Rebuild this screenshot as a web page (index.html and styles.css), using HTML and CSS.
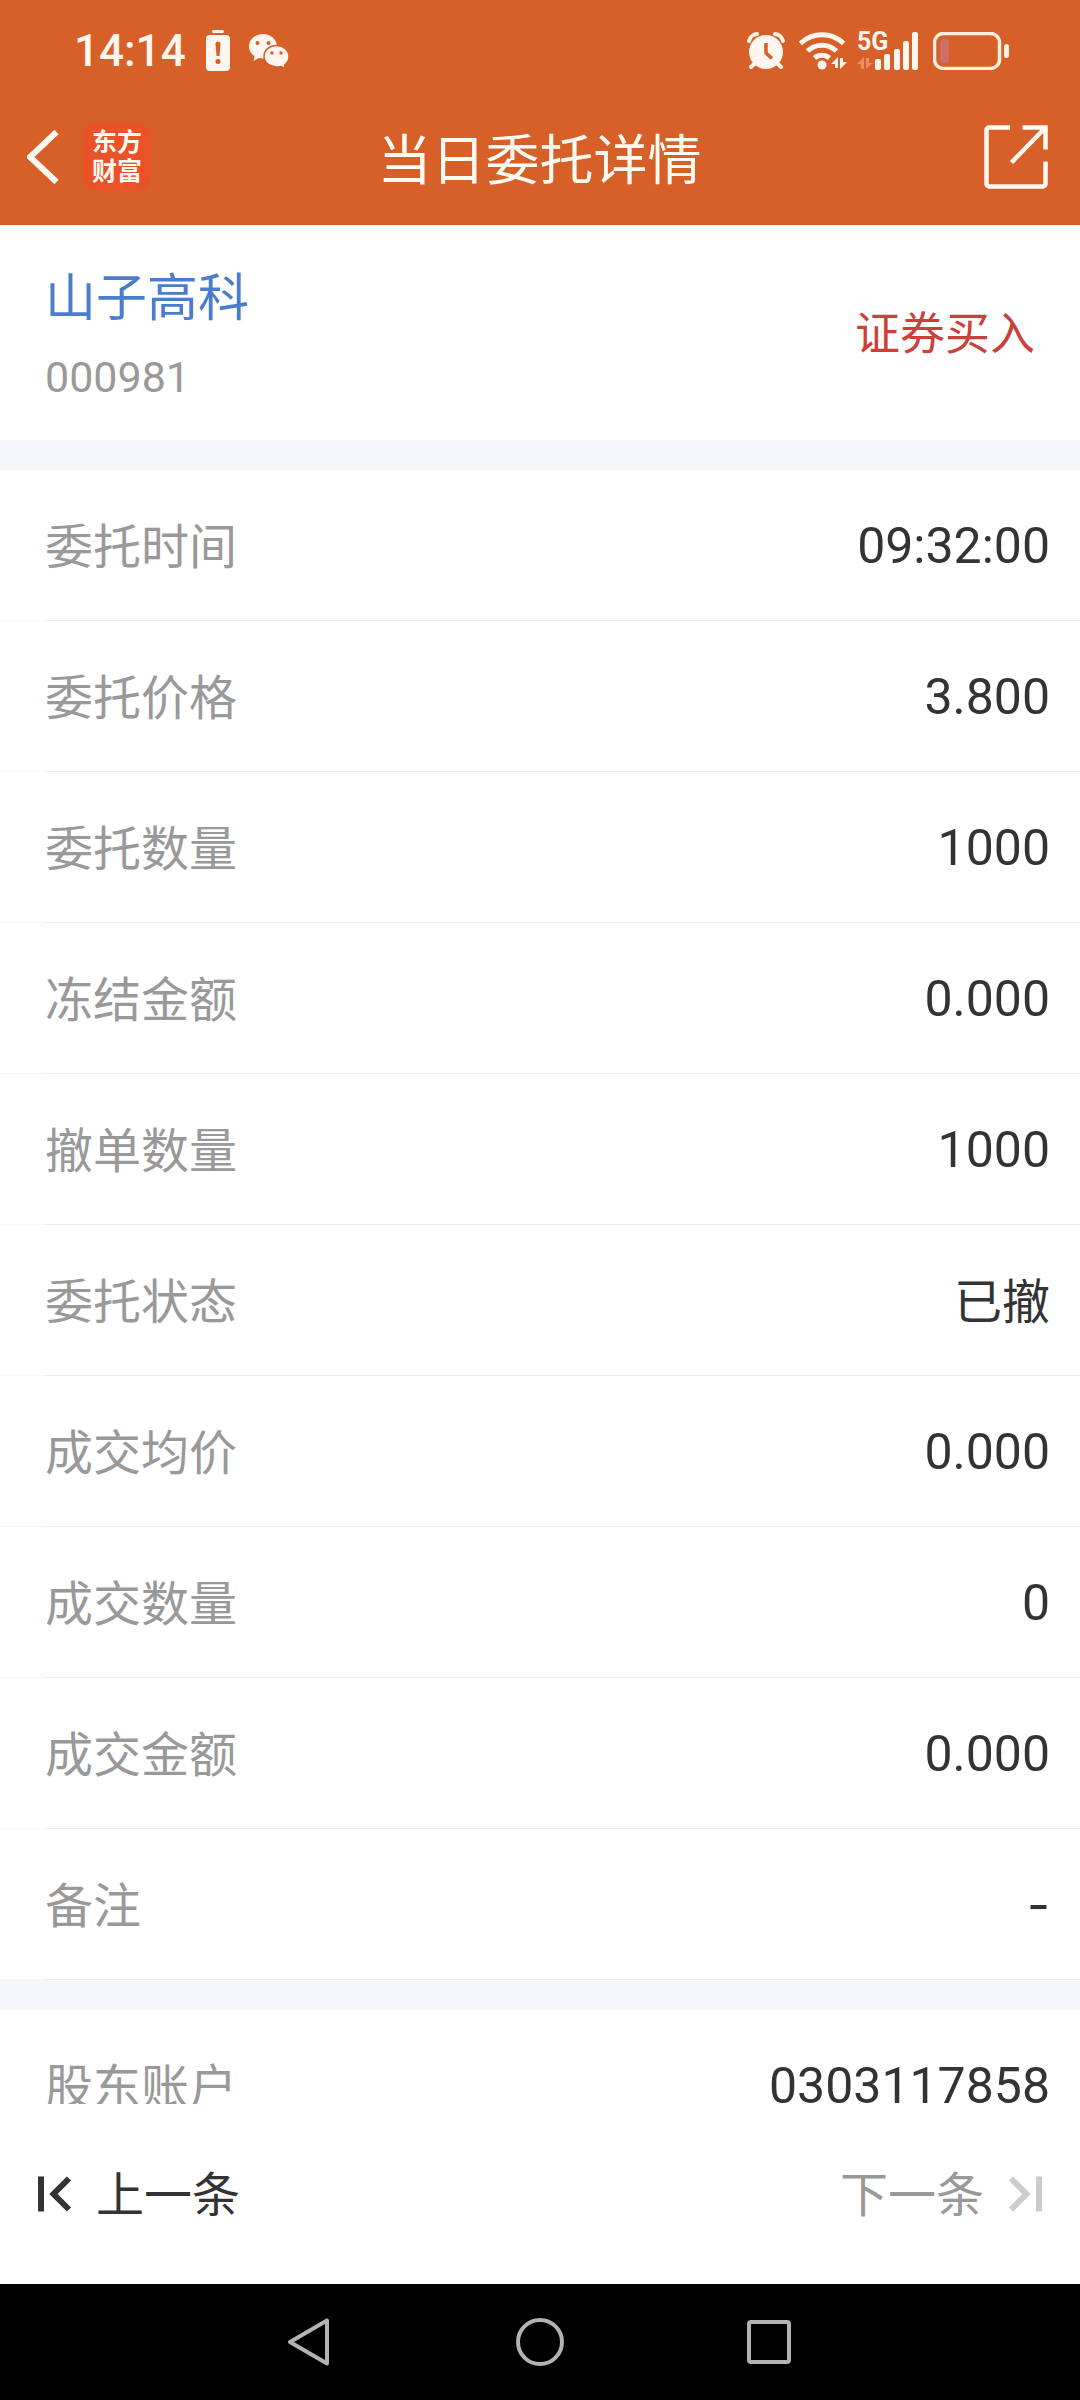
FILE: index.html
```html
<!DOCTYPE html>
<html lang="zh-CN">
<head>
<meta charset="utf-8">
<meta name="viewport" content="width=device-width, initial-scale=1">
<title>当日委托详情</title>
<link rel="stylesheet" href="styles.css">
</head>
<body>
<div class="app">
  <header class="top">
    <div class="status">
      <div class="status-left">
        <span class="clock">14:14</span>
        <svg class="icon-alert" width="24" height="42" viewBox="0 0 24 42" aria-hidden="true">
          <rect x="6" y="0" width="12" height="3" rx="1.5" fill="#fff6ef"/>
          <rect x="0" y="5" width="24" height="36" rx="4" fill="#fff6ef"/>
          <path d="M9.500 14a2.500 2.500 0 0 1 5 0l-1 12h-3z" fill="#d75f28"/>
          <circle cx="12" cy="31.500" r="2.500" fill="#d75f28"/>
        </svg>
        <svg class="icon-chat" width="42" height="36" viewBox="0 0 42 36" aria-hidden="true">
          <path d="M15 1C7 1 1 6.500 1 13.500c0 4 2 7.500 5.500 9.800L5.500 28l5.500-3c1.300.3 2.600.5 4 .5 8 0 14-5.500 14-12S23 1 15 1z" fill="#fff6ef"/>
          <path d="M28.500 12.500c-7 0-12.500 4.700-12.500 10.700s5.500 10.800 12.500 10.800c1.600 0 3-.2 4.400-.6l4.600 2.600-1-4c2.800-2 4.500-5.200 4.500-8.800 0-6-5.500-10.700-12.500-10.700z" fill="#fff6ef" stroke="#d75f28" stroke-width="1.500"/>
          <g fill="#d75f28"><circle cx="9.500" cy="10" r="2"/><circle cx="20.500" cy="10" r="2"/><circle cx="24" cy="20" r="1.700"/><circle cx="33" cy="20" r="1.700"/></g>
        </svg>
      </div>
      <div class="status-right">
        <svg width="38" height="38" viewBox="0 0 38 38" aria-hidden="true">
          <g fill="none" stroke="#fff6ef" stroke-linecap="round">
            <path d="M2 9A9 9 0 0 1 10 2M36 9a9 9 0 0 0-8-7" stroke-width="4"/>
            <path d="M8 31l-4 4M30 31l4 4" stroke-width="4"/>
          </g>
          <circle cx="19" cy="20" r="17" fill="#fff6ef"/>
          <path d="M19 11v10l6 5.500" fill="none" stroke="#d75f28" stroke-width="3.500"/>
        </svg>
        <svg width="48" height="38" viewBox="0 0 48 38" aria-hidden="true">
          <g fill="none" stroke="#fff6ef" stroke-width="5">
            <path d="M1.500 11.500a31 31 0 0 1 43 0"/>
            <path d="M8.500 19a21 21 0 0 1 29 0"/>
            <path d="M15.500 26a12 12 0 0 1 15 0"/>
          </g>
          <circle cx="23" cy="33" r="4.500" fill="#fff6ef"/>
          <path d="M32 32l7-7v11h-3v-4zM48 30l-7 7V26h3v4z" fill="#fff6ef"/>
        </svg>
        <div class="cell">
          <span class="cell-label">5G</span>
          <svg width="62" height="38" viewBox="0 0 62 38" aria-hidden="true">
            <path d="M0 32l7-7v12H4v-5zM16 31l-7 6V26h3v5z" fill="#ea8e66"/>
            <g fill="#fff6ef"><rect x="18" y="27" width="6" height="11" rx="2"/><rect x="27" y="22" width="6" height="16" rx="2"/><rect x="37" y="17" width="6" height="21" rx="2"/><rect x="46" y="9" width="6" height="29" rx="2"/><rect x="55" y="0" width="6" height="38" rx="2"/></g>
          </svg>
        </div>
        <svg width="76" height="38" viewBox="0 0 76 38" aria-hidden="true">
          <rect x="1.500" y="1.500" width="65" height="35" rx="9" fill="none" stroke="#ffeedd" stroke-width="3.500"/>
          <rect x="7" y="7" width="9" height="24" rx="4" fill="#cc6e6a"/>
          <rect x="71" y="12" width="5" height="14" rx="2.500" fill="#ffeedd"/>
        </svg>
      </div>
    </div>
    <div class="titlebar">
      <div class="title-left">
        <button class="icon-button" type="button" aria-label="返回">
          <svg width="32" height="54" viewBox="0 0 32 54"><path d="M29.500 2L3 27l26.500 25" fill="none" stroke="#fffaf2" stroke-width="6"/></svg>
        </button>
        <div class="logo"><span>东方</span><span>财富</span></div>
      </div>
      <h1 class="title">当日委托详情</h1>
      <div class="title-right">
        <button class="icon-button" type="button" aria-label="分享">
          <svg width="64" height="64" viewBox="0 0 64 64"><g fill="none" stroke="#fffaf2" stroke-width="4.500"><path d="M26 2.500H5a2.500 2.500 0 0 0-2.500 2.500v54a2.500 2.500 0 0 0 2.500 2.500h54a2.500 2.500 0 0 0 2.500-2.500V36.500"/><path d="M38.500 2.500h23v22M61 3L27.500 37.500"/></g></svg>
        </button>
      </div>
    </div>
  </header>

  <main class="content">
    <section class="stock">
      <div class="stock-id">
        <a class="stock-name" href="#stock">山子高科</a>
        <span class="stock-code">000981</span>
      </div>
      <span class="side">证券买入</span>
    </section>
    <dl class="rows">
      <div class="row"><dt>委托时间</dt><dd>09:32:00</dd></div>
      <div class="row"><dt>委托价格</dt><dd>3.800</dd></div>
      <div class="row"><dt>委托数量</dt><dd>1000</dd></div>
      <div class="row"><dt>冻结金额</dt><dd>0.000</dd></div>
      <div class="row"><dt>撤单数量</dt><dd>1000</dd></div>
      <div class="row"><dt>委托状态</dt><dd class="word">已撤</dd></div>
      <div class="row"><dt>成交均价</dt><dd>0.000</dd></div>
      <div class="row"><dt>成交数量</dt><dd>0</dd></div>
      <div class="row"><dt>成交金额</dt><dd>0.000</dd></div>
      <div class="row"><dt>备注</dt><dd class="empty">-</dd></div>
    </dl>
    <dl class="rows">
      <div class="row"><dt>股东账户</dt><dd>0303117858</dd></div>
    </dl>
  </main>

  <nav class="pager" aria-label="委托记录">
    <button class="pager-button" type="button">
      <svg width="34" height="36" viewBox="0 0 34 36" aria-hidden="true"><path d="M3 0.500v35M31 2.500L15.500 18 31 33.500" fill="none" stroke="#333" stroke-width="6"/></svg>
      <span>上一条</span>
    </button>
    <button class="pager-button" type="button" disabled>
      <span>下一条</span>
      <svg width="34" height="36" viewBox="0 0 34 36" aria-hidden="true"><path d="M31 0.500v35M3 2.500L18.500 18 3 33.500" fill="none" stroke="#ccc" stroke-width="6"/></svg>
    </button>
  </nav>

  <nav class="system" aria-label="系统导航">
    <button class="icon-button" type="button" aria-label="后退"><svg width="48" height="48" viewBox="0 0 48 48"><path d="M41 2.500v43L4 24z" fill="none" stroke="#b3b3b3" stroke-width="4" stroke-linejoin="round"/></svg></button>
    <button class="icon-button" type="button" aria-label="主屏幕"><svg width="48" height="48" viewBox="0 0 48 48"><circle cx="24" cy="24" r="22" fill="none" stroke="#b3b3b3" stroke-width="4"/></svg></button>
    <button class="icon-button" type="button" aria-label="最近任务"><svg width="48" height="48" viewBox="0 0 48 48"><rect x="3" y="4" width="40" height="40" rx="2" fill="none" stroke="#b3b3b3" stroke-width="4"/></svg></button>
  </nav>
</div>
</body>
</html>
```
FILE: styles.css
```css
* { box-sizing: border-box; }

body {
  margin: 0;
  background: #fff;
  color: #333;
  font-family: Roboto, "Noto Sans CJK SC", sans-serif;
}

button {
  padding: 0;
  border: 0;
  background: none;
  color: inherit;
  font: inherit;
}

svg { display: block; flex: none; }

.app {
  display: flex;
  flex-direction: column;
  height: 100vh;
}

/* Header */
.top { background: #d75f28; color: #fffaf2; }

.status {
  display: flex;
  justify-content: space-between;
  align-items: center;
  height: 102px;
  padding: 0 71px 0 74px;
  color: #fff6ef;
}

.status-left,
.status-right { display: flex; align-items: center; }

.status-right { gap: 14px; }
.clock { font-size: 44px; font-weight: 500; line-height: 54px; }
.icon-alert { margin-left: 20px; }
.icon-chat { margin-left: 18px; }

.cell { position: relative; margin-left: -4px; }

.cell-label {
  position: absolute;
  top: 0;
  left: 0;
  font-size: 25px;
  font-weight: 700;
  line-height: 20px;
}

.titlebar {
  display: grid;
  grid-template-columns: 1fr auto 1fr;
  align-items: center;
  height: 123px;
  padding: 0 32px 13px 27px;
}

.title-left { display: flex; align-items: center; gap: 24px; }
.title-right { display: flex; justify-content: flex-end; }

.logo {
  display: flex;
  flex-direction: column;
  align-items: center;
  justify-content: center;
  width: 68px;
  height: 68px;
  border-radius: 14px;
  background: #ea5328;
  font-size: 25px;
  font-weight: 700;
  line-height: 29px;
}

.title {
  margin: 0;
  padding-left: 4px;
  font-family: "Noto Sans CJK SC", sans-serif;
  font-size: 54px;
  font-weight: 400;
  line-height: 80px;
}

/* Order details */
.content { flex: 1 1 0; min-height: 0; overflow: hidden; }

.stock {
  display: flex;
  justify-content: space-between;
  align-items: center;
  height: 215px;
  padding: 4px 45px 0;
}

.stock-id { display: flex; flex-direction: column; gap: 12px; }
.stock-name { color: #4a7dcc; font-size: 51px; line-height: 72px; text-decoration: none; }
.stock-code { color: #999; font-size: 43px; line-height: 60px; }
.side { color: #cb4038; font-size: 45px; line-height: 64px; }

.rows { margin: 0; border-top: 30px solid #f6f7fa; }

.row {
  display: flex;
  justify-content: space-between;
  align-items: center;
  height: 151px;
  padding: 0 30px 0 45px;
  background: linear-gradient(to right, #f9f9f9 45px, #ebebeb 45px) bottom / 100% 1px no-repeat;
}

.row dt { padding-top: 4px; color: #999; font-size: 48px; line-height: 72px; }
.row dd { margin: 0; font-size: 50px; line-height: 72px; }
.row .word { padding-top: 4px; font-size: 48px; }
.row .empty { font-family: Inter, sans-serif; }

/* Previous / next record */
.pager {
  display: flex;
  justify-content: space-between;
  align-items: center;
  height: 180px;
  padding: 0 38px;
  background: #fff;
}

.pager-button { display: flex; align-items: center; gap: 24px; font-size: 48px; line-height: 72px; }
.pager-button span { padding-top: 4px; }
.pager-button:disabled { color: #999; }

/* System navigation */
.system {
  display: flex;
  justify-content: center;
  align-items: center;
  gap: 182px;
  height: 116px;
  background: #000;
}
```
